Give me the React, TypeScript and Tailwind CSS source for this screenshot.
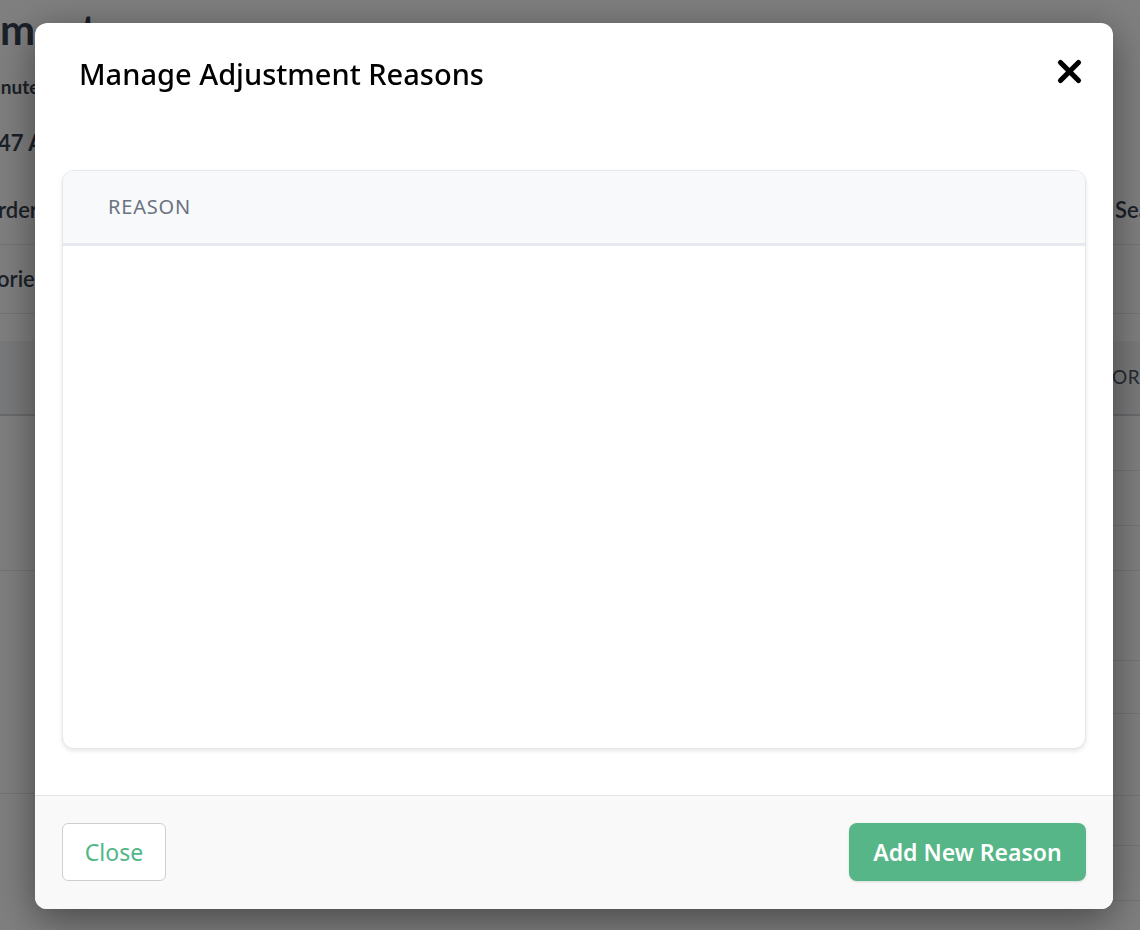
import React from "react";

const font = { fontFamily: "'Noto Sans', Lato, sans-serif" };
const bgFont = { fontFamily: "Lato, 'Noto Sans', sans-serif" };

function BackgroundPage() {
  const leftRows = [155, 223, 200];
  const rightRows = [55, 55, 45, 90, 53, 82, 50, 55];
  return (
    <div className="h-[930px] w-[1140px] overflow-hidden bg-white text-[#374151]" style={bgFont}>
      <h1 className="pt-[6px] text-[42px] font-bold leading-[46px]">ment</h1>
      <div className="-ml-[4px] pt-[24px] text-[19px] font-bold leading-[22px]">inutes ago</div>
      <div className="-ml-[2px] pt-[33px] text-[22px] font-bold leading-[24px]">47 Adjustments</div>
      <div className="mt-[43px] flex justify-between border-b border-[#e5e7eb] pb-[22px] text-[22px] font-semibold leading-[24px]">
        <span className="-ml-[2px]">rders</span>
        <span className="w-[25px] overflow-hidden whitespace-nowrap">Search</span>
      </div>
      <div className="-ml-[3px] border-b border-[#e5e7eb] py-[20px] text-[22px] font-semibold leading-[28px]">ories</div>
      <div className="mt-[27px] flex h-[75px] items-center justify-end border-b-2 border-[#d1d5db] bg-[#f3f4f6] text-[19px] uppercase tracking-wide text-[#4b5563]">
        <span className="w-[28px] overflow-hidden whitespace-nowrap">OR</span>
      </div>
      <div className="flex">
        <div className="w-[570px]">
          {leftRows.map((h, i) => (
            <div key={i} className="border-b border-[#e5e7eb]" style={{ height: h }} />
          ))}
        </div>
        <div className="flex-1">
          {rightRows.map((h, i) => (
            <div key={i} className="border-b border-[#e5e7eb]" style={{ height: h }} />
          ))}
        </div>
      </div>
    </div>
  );
}

function CloseIcon() {
  return (
    <svg width="27" height="27" viewBox="0 0 24 24" aria-hidden="true">
      <path d="M4 4 L20 20 M20 4 L4 20" stroke="#000" strokeWidth="4.6" strokeLinecap="round" fill="none" />
    </svg>
  );
}

export default function App() {
  return (
    <div className="relative h-[930px] w-[1140px] overflow-hidden">
      <BackgroundPage />
      <div className="fixed inset-0 bg-black/50 pl-[35px] pt-[23px]" style={font}>
        <div className="flex h-[886px] w-[1078px] flex-col overflow-hidden rounded-xl bg-white shadow-[0_10px_40px_rgba(0,0,0,0.45)]">
          <div className="flex items-start justify-between pl-[44px] pr-[30px] pt-[32px]">
            <h2 className="text-[29px] font-medium leading-[37px] text-black">Manage Adjustment Reasons</h2>
            <button type="button" aria-label="Close" className="mt-[3px] flex items-center justify-center">
              <CloseIcon />
            </button>
          </div>
          <div className="flex-1 px-[27px] pt-[78px] pb-[46px]">
            <div className="h-full overflow-hidden rounded-xl border border-[#e5e7eb] bg-white shadow-[0_2px_4px_rgba(0,0,0,0.1)]">
              <div className="flex h-[75px] items-center border-b-[3px] border-[#e8e9ef] bg-[#f8f9fb] pl-[45px]">
                <span className="text-[20px] uppercase tracking-[0.04em] text-[#6b7280]">Reason</span>
              </div>
            </div>
          </div>
          <div className="flex items-center justify-between border-t border-[#e4e4e4] bg-[#f9f9f9] px-[27px] pb-[28px] pt-[27px]">
            <button
              type="button"
              className="flex h-[58px] w-[104px] items-center justify-center rounded-md border border-[#cfcfcf] bg-white text-[23px] text-[#52b788]"
            >
              Close
            </button>
            <button
              type="button"
              className="flex h-[58px] w-[237px] items-center justify-center rounded-lg bg-[#56b687] text-[23px] font-semibold text-white shadow-sm"
            >
              Add New Reason
            </button>
          </div>
        </div>
      </div>
    </div>
  );
}
